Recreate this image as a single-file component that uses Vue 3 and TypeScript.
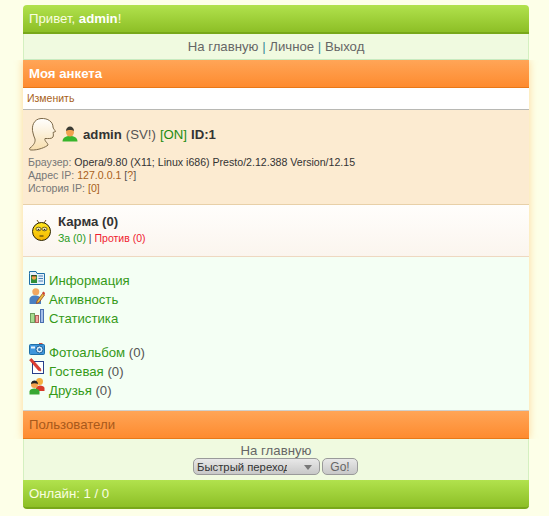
<script setup lang="ts">
const browser = 'Opera/9.80 (X11; Linux i686) Presto/2.12.388 Version/12.15'
</script>

<template>
  <div class="page">
    <header class="bar green top">Привет, <b>admin</b>!</header>
    <nav class="nav main-nav">
      <a>На главную</a> <span class="sep">|</span> <a>Личное</a> <span class="sep">|</span> <a>Выход</a>
    </nav>
    <main class="sheet">
      <h1 class="bar orange title">Моя анкета</h1>
      <div class="edit"><a>Изменить</a></div>
      <section class="profile">
        <div class="who">
          <svg class="head" width="28" height="34" viewBox="0 0 28 34">
            <defs>
              <linearGradient id="hg" x1="0" y1="0" x2="0" y2="1">
                <stop offset="0" stop-color="#ffffff" />
                <stop offset="1" stop-color="#f8dfae" />
              </linearGradient>
            </defs>
            <path d="M5 16C3 9 6 2 13 1.500C20 1 25 5 25 10C25 11.500 27 13 27.500 14.500L25 15.500C25.500 17 25.500 19 25 20C24 22 20 21.500 17 21.500C16 24 20 26 20 28C18 30 10 33.500 3 33C1.500 33 1 32 2 31C6 28 7.500 25 7 22C6 20 5.500 18 5 16Z" fill="url(#hg)" stroke="#7d6a4a" stroke-width="1" />
          </svg>
          <svg class="user" width="16" height="16" viewBox="0 0 16 16">
            <path d="M0.500 15.500C0.500 11.500 4 10 8 10C12 10 15.500 11.500 15.500 15.500Z" fill="#38b52c" />
            <ellipse cx="8" cy="6" rx="4" ry="4.500" fill="#f2a24e" />
            <path d="M4 5C4 2 6 0.500 8 0.500C10 0.500 12 2 12 5C10 3.800 6 3.800 4 5Z" fill="#3c3c34" />
          </svg>
          <b class="nick">admin</b>
          <span class="rank">(SV!)</span>
          <span class="on">[ON]</span>
          <b class="uid">ID:1</b>
        </div>
        <div class="meta">
          <div><span class="label">Браузер:</span> {{ browser }}</div>
          <div><span class="label">Адрес IP:</span> <a>127.0.0.1</a> <span class="q">[<a>?</a>]</span></div>
          <div><span class="label">История IP:</span> <a>[0]</a></div>
        </div>
      </section>
      <section class="karma">
        <svg class="smile" width="19" height="22" viewBox="0 0 19 22">
          <defs>
            <linearGradient id="sg" x1="0" y1="0" x2="0" y2="1">
              <stop offset="0" stop-color="#ffe820" />
              <stop offset="1" stop-color="#f4b400" />
            </linearGradient>
          </defs>
          <path d="M7 4L5 1M12 4L14 1" stroke="#7a5a20" fill="none" />
          <circle cx="9.500" cy="12.500" r="9" fill="url(#sg)" stroke="#2a2200" />
          <ellipse cx="6.500" cy="10" rx="2.600" ry="1.800" fill="#f7efb0" stroke="#3a3010" stroke-width="0.700" />
          <ellipse cx="12.500" cy="10" rx="2.600" ry="1.800" fill="#f7efb0" stroke="#3a3010" stroke-width="0.700" />
          <circle cx="6.500" cy="10.500" r="0.800" fill="#222" />
          <circle cx="12.500" cy="10.500" r="0.800" fill="#222" />
          <path d="M7.500 17H11.500" stroke="#3a3010" stroke-width="1" />
        </svg>
        <div>
          <div class="karma-title">Карма (0)</div>
          <div class="votes"><span class="pro">За (0)</span> | <span class="con">Против (0)</span></div>
        </div>
      </section>
      <section class="links">
        <ul class="group">
          <li>
            <svg width="16" height="16" viewBox="0 0 16 16">
              <path d="M0.500 3.500V1.500H7L8 3.500H15.500V14.500H0.500Z" fill="#e4f1fa" stroke="#1f6fa8" />
              <rect x="2" y="5" width="6" height="8" fill="#2f8f3a" />
              <circle cx="5" cy="7.500" r="2.200" fill="#f2a24e" />
              <path d="M2.800 5.800H7.200" stroke="#222" />
              <path d="M9.500 6H14M9.500 8.500H14M9.500 11H14" stroke="#4a7fb5" stroke-width="1.200" />
            </svg>
            <span class="row"><a>Информация</a></span>
          </li>
          <li>
            <svg class="up" width="16" height="16" viewBox="0 0 16 16">
              <circle cx="6.800" cy="3.800" r="3.500" fill="#f2a860" />
              <path d="M0.500 16V11.500C0.500 9 3 7.500 6 7.500C9 7.500 12 9 12 11.500V16Z" fill="#4a80c0" />
              <path d="M8 13L13.500 5.500L15.500 7L10 14.500L7.500 15.500Z" fill="#e8c040" stroke="#a04020" stroke-width="0.800" />
              <path d="M13 5L14.500 3.500L16 5L15.500 7Z" fill="#d04030" />
            </svg>
            <span class="row"><a>Активность</a></span>
          </li>
          <li>
            <svg width="16" height="16" viewBox="0 0 16 16">
              <rect x="1.500" y="5.500" width="4" height="9" fill="#a6dc90" stroke="#6f9f5f" />
              <rect x="6.500" y="7.500" width="3" height="7" fill="#f3a6a0" stroke="#b0605a" />
              <rect x="11.500" y="1.500" width="3" height="13" fill="#a5bfe8" stroke="#4a6fb0" />
            </svg>
            <span class="row"><a>Статистика</a></span>
          </li>
        </ul>
        <ul class="group second">
          <li>
            <svg width="16" height="16" viewBox="0 0 16 16">
              <path d="M10 3V1H13.500V3Z" fill="#d05040" />
              <rect x="0.500" y="2.500" width="15" height="10" rx="1" fill="#3f96dc" stroke="#1f6fa8" />
              <circle cx="10.500" cy="7.500" r="3.500" fill="#d8ecfa" stroke="#1f5f98" />
              <circle cx="10.500" cy="7.500" r="1.500" fill="#2f78b8" />
              <rect x="2" y="4.500" width="4" height="2" fill="#e8f4fc" />
            </svg>
            <span class="row"><a>Фотоальбом</a> (0)</span>
          </li>
          <li>
            <svg class="high" width="16" height="16" viewBox="0 0 16 16">
              <rect x="3.500" y="3.500" width="11" height="12" fill="#fff" stroke="#27408b" />
              <path d="M0.500 2L2.500 0.500L11.500 10.500L12 13L9.500 12.500Z" fill="#e03a30" stroke="#a82018" stroke-width="0.500" />
            </svg>
            <span class="row"><a>Гостевая</a> (0)</span>
          </li>
          <li>
            <svg class="high" width="16" height="18" viewBox="0 0 16 18">
              <circle cx="10.500" cy="4.500" r="3.500" fill="#f5b040" />
              <path d="M7 14V11C7 9.500 9 8.500 11 8.500C13 8.500 15.500 9.500 15.500 11V14Z" fill="#d83a2a" />
              <circle cx="5.500" cy="7.500" r="3.500" fill="#f2a24e" />
              <path d="M2 7C2 4.500 4 3.500 5.500 3.500C7 3.500 9 4.500 9 7C7 6 4 6 2 7Z" fill="#222" />
              <path d="M0.500 17.500V14.500C0.500 12.500 3 11.500 5.500 11.500C8 11.500 10.500 12.500 10.500 14.500V17.500Z" fill="#38a832" />
            </svg>
            <span class="row"><a>Друзья</a> (0)</span>
          </li>
        </ul>
      </section>
      <div class="bar orange users">Пользователи</div>
    </main>
    <footer class="nav foot-nav">
      <a>На главную</a>
      <form class="jump" @submit.prevent>
        <div class="select"><span class="select-text">Быстрый переход</span><i class="arrow"></i></div>
        <button class="go" type="button">Go!</button>
      </form>
    </footer>
    <div class="bar green bottom">Онлайн: 1 / 0</div>
  </div>
</template>

<style>
html, body { margin: 0; background: #fdffe8; }
</style>

<style scoped>
.page {
  width: 506px;
  margin: 5px 0 0 23px;
  font-family: "Liberation Sans", Arial, sans-serif;
  font-size: 13.2px;
  color: #666;
}
.bar {
  box-sizing: border-box;
  margin: 0;
  padding: 0 6px;
  font-size: 13.2px;
  font-weight: normal;
  display: flex;
  align-items: center;
  white-space: pre;
}
.green {
  height: 29px;
  color: #fafee0;
  background: linear-gradient(#b1e24d, #8dbf26);
  border-bottom: 2px solid #78a81a;
}
.top { border-radius: 4px 4px 0 0; }
.top b { color: #fff; }
.bottom { border-radius: 0 0 4px 4px; }
.nav {
  box-sizing: border-box;
  text-align: center;
  background: #f0fae0;
  border: solid #d4f0c0;
  border-width: 0 1px;
}
.main-nav {
  height: 26px;
  line-height: 25px;
  border-bottom: 1px solid #c8eac0;
}
.sep { color: #3c8a98; }
.sheet {
  box-shadow: 0 0 8px rgba(255, 190, 100, 0.6);
  clip-path: inset(0 -10px);
}
.orange {
  height: 28px;
  color: #fff;
  background: linear-gradient(#ffa557, #fe8b2f);
  border-bottom: 1px solid #e87818;
}
.title { font-weight: bold; }
.users { color: #a8591b; }
.edit {
  box-sizing: border-box;
  height: 22px;
  padding-left: 4px;
  line-height: 21px;
  font-size: 10.5px;
  background: #fff;
  border-bottom: 1px solid #b8b8b4;
}
a { color: inherit; }
.edit a { color: #a85f20; }
.profile {
  box-sizing: border-box;
  height: 95px;
  padding: 4px 5px 0;
  background: #fcebd1;
  border-bottom: 1px solid #e8d0a8;
}
.who { display: flex; align-items: center; height: 40px; white-space: pre; }
.head { margin-right: 6px; flex: none; }
.user { margin-right: 5px; flex: none; }
.nick { color: #333; }
.rank { margin-left: 4px; color: #555; }
.on { margin-left: 4px; color: #228b10; }
.uid { margin-left: 4px; color: #333; }
.meta { margin-top: 2px; font-size: 10.6px; line-height: 13px; color: #333; }
.label { color: #777; }
.meta a { color: #a85f20; }
.q { color: #555; }
.karma {
  box-sizing: border-box;
  height: 52px;
  padding: 9px 0 0 9px;
  display: flex;
  align-items: flex-start;
  gap: 7px;
  background: linear-gradient(#fffefc, #fbf5ee);
  border-bottom: 1px solid #eed8c0;
}
.smile { margin-top: 5px; flex: none; }
.karma-title { font-weight: bold; color: #333; line-height: 16px; }
.votes { margin-top: 1px; font-size: 10.5px; line-height: 14px; color: #444; }
.pro { color: #269b1a; }
.con { color: #f01c30; }
.links {
  box-sizing: border-box;
  height: 154px;
  padding: 14px 6px 0;
  background: #f4fff4;
  border-bottom: 1px solid #d0d0cc;
}
.group { list-style: none; margin: 0; padding: 0; }
.second { margin-top: 15px; }
.group li { display: flex; align-items: flex-start; height: 19px; line-height: 19px; white-space: pre; color: #555; }
.group li svg { margin: -1px 4px 0 0; flex: none; }
.group li svg.up { margin-top: -2px; }
.group li svg.high { margin-top: -4px; }
.group a { color: #349a18; }
.foot-nav {
  height: 41px;
  padding-top: 5px;
  line-height: 14px;
}
.jump { display: flex; justify-content: center; gap: 2px; margin: 0; padding-right: 1px; }
.select, .go {
  box-sizing: border-box;
  height: 17px;
  border: 1px solid #9a9a9a;
  border-radius: 5px;
  background: linear-gradient(#e8e8e8, #c8c8c8);
  font-family: "Liberation Sans", Arial, sans-serif;
  font-size: 11.3px;
}
.select {
  width: 127px;
  display: flex;
  align-items: center;
  position: relative;
  padding-left: 3px;
  color: #333;
  overflow: hidden;
}
.select-text { width: 90px; overflow: hidden; white-space: pre; }
.arrow {
  position: absolute;
  right: 7px;
  top: 6px;
  border: solid transparent;
  border-width: 5px 4px 0;
  border-top-color: #777;
}
.go { width: 36px; padding: 0; color: #666; font-size: 12px; }
</style>
